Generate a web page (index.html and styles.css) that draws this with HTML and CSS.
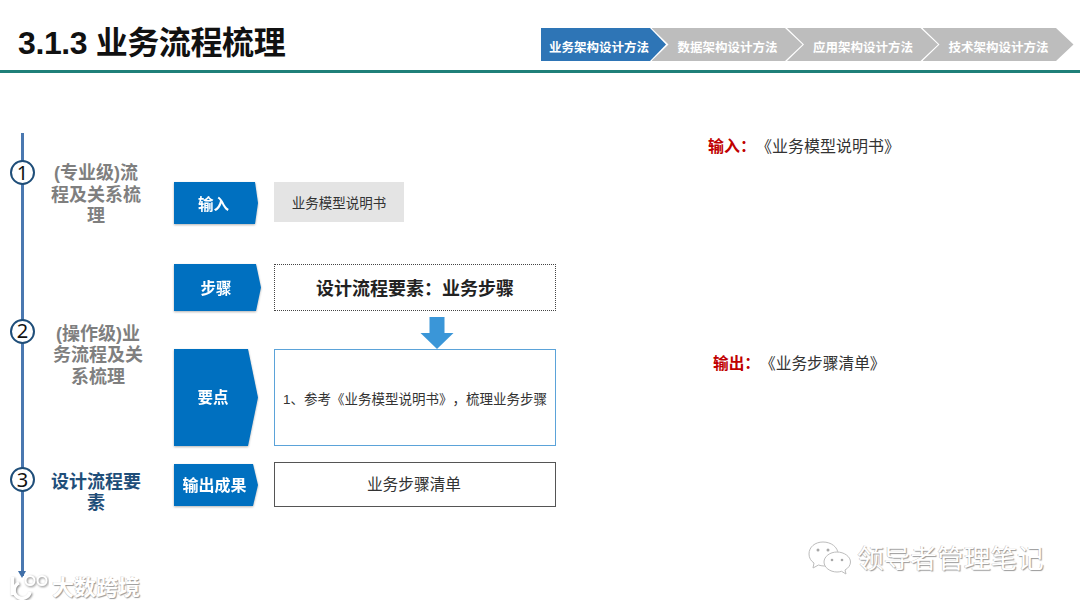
FILE: index.html
```html
<!DOCTYPE html>
<html lang="zh-CN">
<head>
<meta charset="utf-8">
<title>3.1.3 业务流程梳理</title>
<link rel="stylesheet" href="styles.css">
</head>
<body>
<div class="slide">
  <header class="header">
    <h1 class="title">3.1.3 业务流程梳理</h1>
    <nav class="crumbs">
      <span class="crumb crumb-active">业务架构设计方法</span>
      <span class="crumb">数据架构设计方法</span>
      <span class="crumb">应用架构设计方法</span>
      <span class="crumb">技术架构设计方法</span>
    </nav>
  </header>
  <main class="main">
    <div class="timeline">
      <div class="stage stage-one">
        <span class="num">1</span>
        <p class="stage-text">(专业级)流程及关系梳理</p>
      </div>
      <div class="stage stage-two">
        <span class="num">2</span>
        <p class="stage-text stage-text-wide">(操作级)业务流程及关系梳理</p>
      </div>
      <div class="stage stage-three">
        <span class="num">3</span>
        <p class="stage-text stage-current">设计流程要素</p>
      </div>
    </div>
    <div class="flow">
      <div class="row row-input">
        <div class="tag tag-input">输入</div>
        <div class="box box-gray">业务模型说明书</div>
      </div>
      <div class="row row-step">
        <div class="tag tag-step">步骤</div>
        <div class="box box-dotted">设计流程要素：业务步骤</div>
      </div>
      <div class="arrow-row">
        <svg class="down-arrow" width="34" height="32" viewBox="0 0 34 32"><path d="M9.500 0H24.500V16H33.500L17 32L.5 16H9.500Z" fill="#3a96d8"/></svg>
      </div>
      <div class="row row-point">
        <div class="tag tag-point">要点</div>
        <div class="box box-blue">1、参考《业务模型说明书》，梳理业务步骤</div>
      </div>
      <div class="row row-output">
        <div class="tag tag-output">输出成果</div>
        <div class="box box-plain">业务步骤清单</div>
      </div>
    </div>
    <div class="notes">
      <p class="note note-in"><b class="note-key">输入：</b>《业务模型说明书》</p>
      <p class="note note-out"><b class="note-key">输出：</b>《业务步骤清单》</p>
    </div>
  </main>
  <div class="mark-left">
    <svg class="mark-logo" width="40" height="26" viewBox="0 0 40 26"><g fill="none" stroke="#fff" stroke-width="3.500" class="logo-strokes"><path d="M3.500 3V21"/><path d="M10 9A8 8 0 1 0 21 18"/><circle cx="21" cy="6.500" r="4.500" stroke-width="2"/><circle cx="33" cy="6.500" r="4.500" stroke-width="2"/></g></svg>
    <span class="mark-left-text">大数跨境</span>
  </div>
  <div class="mark-right">
    <svg class="mark-wechat" width="44" height="34" viewBox="0 0 44 34"><g fill="#fff" stroke="#bdbdbd" stroke-width="1"><path d="M15 1C7 1 1 6 1 13C1 17 3 20 6 22L5 27L10.500 24C12 24.500 14 25 16 25C24 25 30 20 30 13C30 6 23 1 15 1Z"/><path d="M29 11C22 11 16 15.500 16 21C16 26.500 22 31 29 31C30.500 31 32 30.800 33.500 30.300L38 33L37 29C40.500 27 42.500 24 42.500 21C42.500 15.500 36 11 29 11Z"/></g><g fill="#a8a8a8"><circle cx="10" cy="9" r="1.500"/><circle cx="20" cy="9" r="1.500"/><circle cx="24" cy="19" r="1.300"/><circle cx="34" cy="19" r="1.300"/></g></svg>
    <span class="mark-right-text">领导者管理笔记</span>
  </div>
</div>
</body>
</html>
```
FILE: styles.css
```css
* { box-sizing: border-box; }
html, body { margin: 0; padding: 0; background: #fff; }
body {
  font-family: "Liberation Sans", "Noto Sans CJK SC", sans-serif;
  color: #222;
  text-spacing-trim: space-all;
}
p { margin: 0; }

.slide {
  position: relative;
  width: 1080px;
  height: 607px;
  overflow: hidden;
  background: #fff;
}

/* Header */
.header {
  height: 73px;
  border-bottom: 3px solid #1f8079;
  display: flex;
  justify-content: space-between;
  padding: 0 6.500px 0 18px;
}
.title {
  margin: 21px 0 0;
  font-size: 32px;
  line-height: 44px;
  font-weight: 700;
  color: #111;
  letter-spacing: -0.400px;
}
.crumbs {
  display: flex;
  margin-top: 28px;
  height: 33px;
}
.crumb {
  width: 151px;
  height: 33px;
  margin-right: -15.500px;
  padding: 3px 0 0 26px;
  display: flex;
  align-items: center;
  font-size: 12.500px;
  font-weight: 700;
  color: #fff;
  background: #bdbdbd;
  clip-path: polygon(0 0, 133.500px 0, 100% 50%, 133.500px 100%, 0 100%, 17px 50%);
}
.crumb:last-child { margin-right: 0; }
.crumb-active {
  width: 125px;
  margin-right: -14.500px;
  padding-left: 8px;
  background: #2e75b6;
  clip-path: polygon(0 0, 109px 0, 100% 50%, 109px 100%, 0 100%);
}

/* Main */
.main {
  display: flex;
  height: 534px;
}
.timeline {
  width: 174px;
  flex: none;
  position: relative;
  padding-left: 10px;
}
.timeline::before {
  content: "";
  position: absolute;
  left: 21px;
  top: 60px;
  height: 443px;
  width: 2.500px;
  background: #4a78b0;
}
.timeline::after {
  content: "";
  position: absolute;
  left: 18.250px;
  top: 498px;
  border-left: 4px solid transparent;
  border-right: 4px solid transparent;
  border-top: 7px solid #3f6fa8;
}
.stage {
  position: relative;
  display: flex;
}
.stage-one { padding-top: 87px; }
.stage-two { padding-top: 91px; }
.stage-three { padding-top: 79px; }
.num {
  flex: none;
  width: 25px;
  height: 25px;
  border: 2px solid #1f4e79;
  border-radius: 50%;
  background: #fff;
  display: flex;
  align-items: center;
  justify-content: center;
  font-family: "Noto Sans", sans-serif;
  font-size: 20px;
  line-height: 1;
  color: #111;
  position: relative;
  z-index: 1;
}
.stage-text {
  width: 94px;
  margin: 3px 0 0 14px;
  font-size: 18px;
  line-height: 21.500px;
  font-weight: 700;
  color: #7f7f7f;
  text-align: center;
}
.stage-text-wide { margin: 5px 0 0 16px; }
.stage-current { color: #1f4e79; margin-top: 4.500px; }

/* Flow */
.flow {
  width: 382px;
  flex: none;
  padding-top: 109px;
}
.row {
  display: flex;
  align-items: stretch;
}
.row-input { height: 40px; margin-bottom: 42px; }
.row-step { height: 47px; }
.row-point { height: 97px; margin-bottom: 16px; }
.row-output { height: 45px; }
.arrow-row {
  width: 282px;
  margin-left: 100px;
  height: 38px;
  padding-top: 6px;
}
.down-arrow { display: block; margin: 0 auto; position: relative; left: 22px; }
.tag {
  flex: none;
  position: relative;
  display: flex;
  align-items: center;
  justify-content: center;
  color: #fff;
  font-weight: 700;
  font-size: 15.500px;
  filter: drop-shadow(0 1.500px 1px rgba(0, 0, 0, .3));
}
.tag::before {
  content: "";
  position: absolute;
  inset: 0;
  z-index: -1;
  background: #0070c0;
}
.tag-input {
  width: 84px;
  height: 42px;
  padding-right: 5px;
  margin-right: 16px;
}
.tag-input::before { clip-path: polygon(0 0, 81px 0, 100% 50%, 81px 100%, 0 100%); }
.tag-step {
  width: 87px;
  height: 47px;
  padding: 0 3px 2px 0;
  margin-right: 13px;
}
.tag-step::before { clip-path: polygon(0 0, 82px 0, 100% 50%, 82px 100%, 0 100%); }
.tag-point {
  width: 84px;
  padding: 0 6px 3px 0;
  margin-right: 16px;
}
.tag-point::before { clip-path: polygon(0 0, 74px 0, 100% 50%, 74px 100%, 0 100%); }
.tag-output {
  width: 84px;
  height: 42px;
  margin: 2px 16px 0 0;
  padding: 0 3px 3px 0;
  font-size: 16px;
}
.tag-output::before { clip-path: polygon(0 0, 79px 0, 100% 50%, 79px 100%, 0 100%); }
.box {
  width: 282px;
  display: flex;
  align-items: center;
  justify-content: center;
  color: #333;
}
.box-gray {
  width: 130px;
  background: #e4e4e4;
  font-size: 13.500px;
}
.box-dotted {
  border: 1px dotted #444;
  padding-bottom: 2px;
  font-size: 18px;
  font-weight: 700;
  color: #222;
}
.box-blue {
  border: 1.500px solid #5ba3d9;
  font-size: 13.500px;
  white-space: nowrap;
}
.box-plain {
  border: 1px solid #555;
  padding: 0 2px 3px 0;
  font-size: 15.700px;
}

/* Notes */
.notes {
  padding: 63px 0 0 152px;
  flex: 1;
}
.note {
  font-size: 16px;
  line-height: 22px;
  color: #333;
  white-space: nowrap;
}
.note-key { color: #c00000; }
.note-out {
  margin: 195px 0 0 5px;
  font-size: 15.700px;
}

/* Watermarks */
.mark-left, .mark-right {
  position: absolute;
  display: flex;
  align-items: flex-start;
}
.mark-left { left: 9px; top: 574px; }
.mark-right { left: 808px; top: 541px; }
.logo-strokes { filter: drop-shadow(1px 1px 1px #888); }
.mark-left-text {
  margin: -1px 0 0 3px;
  font-size: 22px;
  line-height: 30px;
  font-weight: 700;
  color: #fff;
  text-shadow: 1px 1px 1px #999, -0.500px -0.500px 0 #ccc;
}
.mark-right-text {
  margin: 1px 0 0 5px;
  font-size: 26.700px;
  line-height: 34px;
  color: #fff;
  text-shadow: 1px 1px 1px #999, -0.500px -0.500px 0 #bbb;
}
```
